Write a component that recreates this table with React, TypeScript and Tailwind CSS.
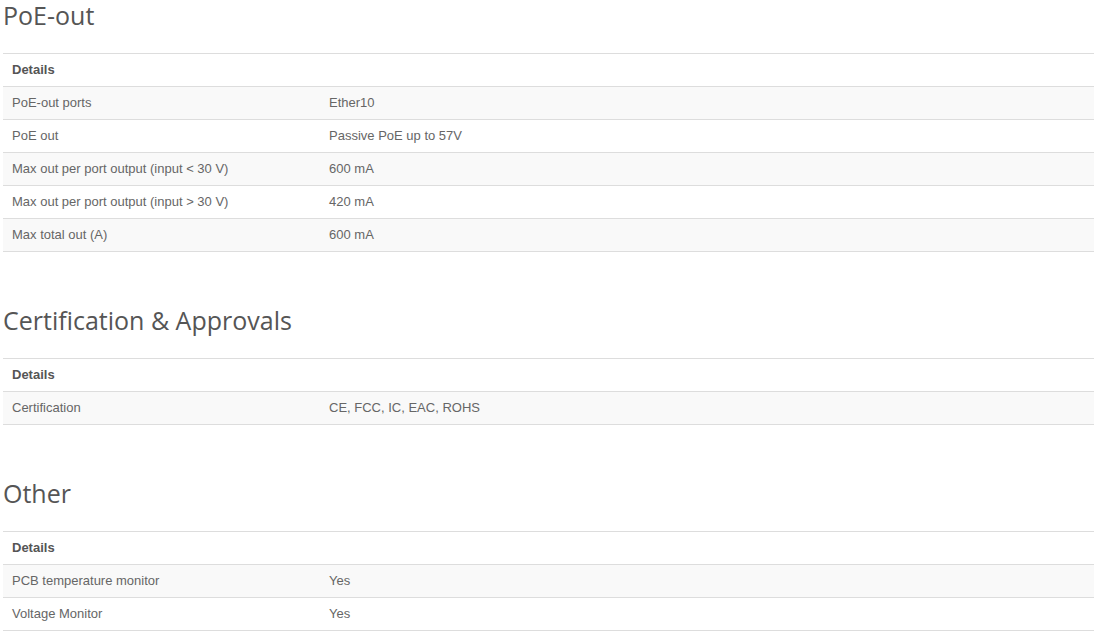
const sections = [
  {
    title: "PoE-out",
    rows: [
      ["PoE-out ports", "Ether10"],
      ["PoE out", "Passive PoE up to 57V"],
      ["Max out per port output (input < 30 V)", "600 mA"],
      ["Max out per port output (input > 30 V)", "420 mA"],
      ["Max total out (A)", "600 mA"],
    ],
  },
  {
    title: "Certification & Approvals",
    rows: [["Certification", "CE, FCC, IC, EAC, ROHS"]],
  },
  {
    title: "Other",
    rows: [
      ["PCB temperature monitor", "Yes"],
      ["Voltage Monitor", "Yes"],
    ],
  },
];

function SpecTable({ rows }: { rows: string[][] }) {
  return (
    <div className="border-b border-[#dddddd] text-[13px] text-[#666666] font-['Liberation_Sans',Arial,sans-serif]">
      <div className="flex h-[33px] items-center border-t border-[#dddddd] px-[9px] font-bold text-[#555555]">
        Details
      </div>
      {rows.map(([label, value], i) => (
        <div
          key={label}
          className={`flex h-[33px] items-center border-t border-[#dddddd] ${
            i % 2 === 0 ? "bg-[#f9f9f9]" : "bg-white"
          }`}
        >
          <div className="w-[317px] shrink-0 px-[9px]">{label}</div>
          <div className="px-[9px]">{value}</div>
        </div>
      ))}
    </div>
  );
}

export default function App() {
  return (
    <div className="min-h-[639px] w-[1108px] bg-white pl-[3px] pt-px">
      <div className="w-[1091px]">
        {sections.map((s, i) => (
          <section key={s.title} className={i > 0 ? "mt-[54px]" : ""}>
            <h2 className="mb-[24px] font-['Open_Sans',sans-serif] text-[25px] leading-[28px] text-[#555555]">
              {s.title}
            </h2>
            <SpecTable rows={s.rows} />
          </section>
        ))}
      </div>
    </div>
  );
}
